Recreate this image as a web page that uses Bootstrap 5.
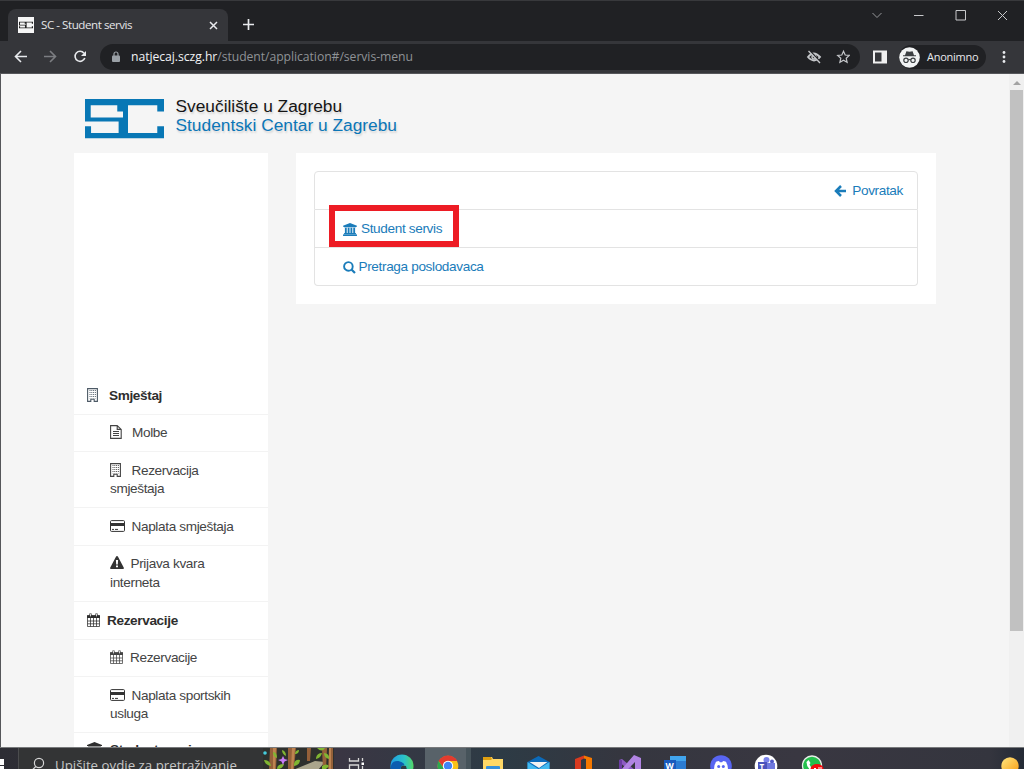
<!DOCTYPE html>
<html lang="hr">
<head>
<meta charset="utf-8">
<title>SC - Student servis</title>
<link href="https://cdn.jsdelivr.net/npm/bootstrap@5.3.0/dist/css/bootstrap.min.css" rel="stylesheet">
<style>
body{width:1024px;height:769px;overflow:hidden;background:#f5f5f5;font-family:"Liberation Sans",Arial,sans-serif;font-size:13.6px;letter-spacing:-.36px;line-height:18.6px;color:#444}
svg{display:block;flex:none}
a{color:#1a7cba;text-decoration:none}
.ui{font-family:"Open Sans","Noto Sans",sans-serif;letter-spacing:0}
.titlebar{height:41px;background:#202124;border-top:1px solid #38393c;padding-left:8px}
.tab{width:220px;height:32px;margin-top:8px;background:#35363a;border-radius:8px 8px 0 0;padding:0 10px;color:#e4e5e8;font-size:11.6px}
.toolbar{height:33px;background:#35363a;border-bottom:1px solid #55565a;padding-left:14px}
.address{width:760px;height:26px;border-radius:13px;background:#202124;margin-left:12px;padding:0 10px 0 11px;font-size:12.2px;letter-spacing:-.05px;color:#8f9296}
.address b{font-weight:400;color:#f1f2f4}
.profile{width:87px;height:24px;border-radius:12px;background:#202124;margin-left:12px;color:#e8eaed;font-size:11px;letter-spacing:-.25px}
.viewport{height:673px;border-left:1px solid #55565a}
.brandrow{height:79px;padding:25px 0 0 84px}
.brandtext{font-size:17.3px;letter-spacing:.02px;line-height:19px;margin:-2px 0 0 11.5px;text-shadow:1px 2px 2px #0002;color:#151515}
.brandtext div+div{color:#0b76b7}
.sidebar{width:194px;height:594px;margin-left:73px;padding-top:224.4px;overflow:hidden}
.side{height:37.5px;padding:9.500px 0 0 13px;border-bottom:1px solid #f3f3f3;flex:none}
.side.sub{padding-left:36px}
.side.two{height:56.1px}
.side.fw-bold{color:#2e2e2e}
.side svg{display:inline-block;vertical-align:-2px}
.panel{width:640px;height:151px;margin-left:28px;padding:18px}
.menu{width:604px;--bs-list-group-border-color:#e3e3e3;--bs-list-group-bg:#fff;--bs-list-group-border-radius:4px}
.menu .list-group-item{height:38px;padding:1px 14px 0 28px}
.menu .list-group-item:first-child{height:39px}
.pick{position:absolute;left:14px;top:-5px;width:130px;height:42px;border:6px solid #ed1c24}
.scroll{width:15px;background:#f0f0f0;padding-top:6px}
.thumb{width:13px;height:541px;background:#c1c1c1;margin-top:5px}
.taskbar{height:22px;background:linear-gradient(90deg,#2d2d34 0,#3a3643 340px,#2d3b45 500px,#35363f 620px,#393741 800px,#34353e 990px,#242a35);border-top:1px solid #77797b;overflow:hidden}
.search{width:245px;height:22px;background:#333435;border-left:1px solid #4b4c4e;padding-left:13px;color:#c6c6c6;font-size:13.3px}
.app{width:45.5px;height:22px}
</style>
</head>
<body class="d-flex flex-column">
<svg width="0" height="0" class="position-absolute">
<defs>
<symbol id="building" viewBox="0 0 12 14"><path d="M.6.6h9.800v12.800H7.200v-2.200H3.800v2.200H.6z" fill="none" stroke="currentColor" stroke-width="1.100"/><path d="M3 2v8.400M4.800 2v8.400M6.600 2v8.400M8.400 2v8.400" stroke="currentColor" stroke-width=".9" stroke-dasharray="1 1"/></symbol>
<symbol id="doc" viewBox="0 0 12 14"><path d="M.6.6h6.600L11.200 4.400v9H.6zM7.200.6v3.800h4" fill="none" stroke="currentColor" stroke-width="1.100"/><path d="M3 6.500h6M3 8.500h6M3 10.500h6" stroke="currentColor" stroke-width="1"/></symbol>
<symbol id="cardpay" viewBox="0 0 15 12"><rect x=".5" y=".6" width="14" height="10.800" rx="1" fill="none" stroke="currentColor"/><path d="M0 3h15v3H0z" fill="currentColor"/><path d="M2 9.400h2M5 9.400h3" stroke="currentColor"/></symbol>
<symbol id="warn" viewBox="0 0 14 13"><path fill="currentColor" fill-rule="evenodd" d="M7 0q.6 0 .9.6l5.800 10.800q.7 1.300-.7 1.500H1q-1.400-.2-.7-1.500L6.100.6Q6.400 0 7 0zM5.900 4l.3 4.600h1.600L8.100 4zM6 9.400v1.900h2V9.400z"/></symbol>
<symbol id="cal" viewBox="0 0 13 14"><path d="M.5 3h12v10.500H.5zM.5 8h12M.5 10.800h12M3.500 5v8.500M6.500 5v8.500M9.500 5v8.500" fill="none" stroke="currentColor" stroke-width=".75"/><path d="M0 2.200h13v2.800H0z" fill="currentColor"/><path d="M3.500.4v3M9.500.4v3" stroke="currentColor" stroke-width="2.200"/><path d="M3.500 1v2.400M9.500 1v2.400" stroke="#fff" stroke-width=".8"/></symbol>
<symbol id="bank" viewBox="0 0 15 14"><path fill="currentColor" d="M7.500 0 15 3v1h-1q0 .6-.6.600H1.600Q1 4.600 1 4H0V3zM2 5.200h2v5.600h1V5.200h2v5.600h1V5.200h2v5.600h1V5.200h2v5.600h.4q.6 0 .6.600v.4H1v-.4q0-.6.6-.6H2zM.6 12.200h13.800q.6 0 .6.600V14H0v-1.200q0-.6.6-.6z"/></symbol>
<symbol id="sc" viewBox="0 0 235 116"><path fill="currentColor" fill-rule="evenodd" d="M0 0H235V37H215V18H128V100H215V80H235V116H0V80H18V100H100V66H0zM17 18V54H113V37H96V18z"/></symbol>
</defs></svg>

<header class="ui">
<div class="titlebar d-flex">
 <div class="tab d-flex align-items-center">
  <svg width="16" height="16" viewBox="0 0 16 16"><path fill="#f6f6f6" d="M0 0h16v16H0z"/><use href="#sc" x="1" y="4.500" width="14" height="7" color="#222"/></svg>
  <span class="me-auto" style="margin-left:7px;letter-spacing:-.46px">SC - Student servis</span>
  <svg width="9" height="9" viewBox="0 0 9 9"><path d="m1 1 7 7m0-7L1 8" stroke="#e8eaed" stroke-width="1.500"/></svg>
 </div>
 <svg style="margin:16px 0 0 15px" width="11" height="13" viewBox="0 0 11 13"><path d="M5.500 2v11M0 7.500h11" stroke="#e8eaed" stroke-width="1.700"/></svg>
 <svg class="ms-auto" width="160" height="30" viewBox="864 0 160 30" fill="none" stroke="#c8c9cb"><path stroke="#96979a" d="m872.500 12 4.500 4.500 4.500-4.500"/><path d="M914 14.500h9.500M956 9.500h9.500v9.500H956zM998 10l9 9m0-9-9 9"/></svg>
</div>
<div class="toolbar d-flex align-items-center">
 <svg width="74" height="18" viewBox="0 0 74 18" fill="none" stroke-width="1.600"><path d="M13 8.500H2M7 3 1.500 8.500 7 14" stroke="#e8eaed"/><path d="M30 8.500h11M36 3l5.500 5.500L36 14" stroke="#7c7e82"/><path d="M70 5.200A5 5 0 1 0 70.800 10" stroke="#e8eaed"/><path d="M72 3v5h-5z" fill="#e8eaed"/></svg>
 <div class="address d-flex align-items-center">
  <svg width="10" height="12" viewBox="0 0 10 12"><rect x="1" y="4.500" width="8" height="6.500" rx="1" fill="#9aa0a6"/><path d="M3 5V3a2 2 0 0 1 4 0v2" fill="none" stroke="#9aa0a6" stroke-width="1.200"/></svg>
  <span class="me-auto" style="margin-left:10px"><b>natjecaj.sczg.hr</b>/student/application#/servis-menu</span>
  <svg width="44" height="16" viewBox="0 0 44 16" fill="none" stroke="#c4c6c9" stroke-width="1.400"><path d="M2 8q5.500-7 12 0-6 7-12 0z" stroke-width="1.900"/><circle cx="8" cy="8" r="2"/><path d="m3.500 1.500 11 11.500" stroke="#202124" stroke-width="1.500"/><path d="m2.500 2 11.500 12"/><path d="m37.500 2.200 1.700 3.800 4.100.4-3.100 2.800.9 4.100-3.600-2.100-3.600 2.100.9-4.100-3.100-2.800 4.100-.4z" stroke-width="1.200"/></svg>
 </div>
 <svg style="margin-left:13px" width="14" height="14" viewBox="0 0 14 14"><path fill="#f0f0f0" fill-rule="evenodd" d="M0 .5h14v13H0zM2 2.500v9h6.500v-9z"/></svg>
 <div class="profile d-flex align-items-center">
  <svg width="21" height="21" viewBox="0 0 21 21"><circle cx="10.500" cy="10.500" r="10.300" fill="#f1f3f4"/><path d="M4 9.300h13v-1H15L13.600 4.200l-3.100.6-3.100-.6L6 8.300H4z" fill="#3c4043"/><g fill="none" stroke="#3c4043" stroke-width="1.200"><circle cx="7" cy="13.300" r="2.200"/><circle cx="14" cy="13.300" r="2.200"/><path d="M9.200 13q1.300-1 2.600 0"/></g></svg>
  <span style="margin-left:7px">Anonimno</span>
 </div>
 <svg style="margin-left:15px" width="6" height="14" viewBox="0 0 6 14" fill="#e8eaed"><circle cx="3" cy="2.500" r="1.400"/><circle cx="3" cy="7" r="1.400"/><circle cx="3" cy="11.500" r="1.400"/></svg>
</div>
</header>

<div class="viewport d-flex">
<main class="flex-grow-1">
 <div class="brandrow d-flex">
  <svg width="79" height="39.500" color="#0877b5" viewBox="0 0 235 116" preserveAspectRatio="none"><use href="#sc"/></svg>
  <div class="brandtext"><div>Sveučilište u Zagrebu</div><div>Studentski Centar u Zagrebu</div></div>
 </div>
 <div class="d-flex align-items-start">
  <nav class="sidebar bg-white d-flex flex-column">
   <div class="side fw-bold"><svg width="12" height="14" color="#4d5a66"><use href="#building"/></svg><span style="margin-left:10px">Smještaj</span></div>
   <div class="side sub"><svg width="12" height="14"><use href="#doc"/></svg><span style="margin-left:10px">Molbe</span></div>
   <div class="side sub two"><svg width="12" height="14"><use href="#building"/></svg><span style="margin-left:9.500px">Rezervacija</span><br>smještaja</div>
   <div class="side sub"><svg width="15" height="12" color="#333" style="vertical-align:-1px"><use href="#cardpay"/></svg><span style="margin-left:6.500px">Naplata smještaja</span></div>
   <div class="side sub two"><svg width="14" height="13" color="#333" style="vertical-align:-1px"><use href="#warn"/></svg><span style="margin-left:6.500px">Prijava kvara</span><br>interneta</div>
   <div class="side fw-bold"><svg width="13" height="14"><use href="#cal"/></svg><span style="margin-left:7px">Rezervacije</span></div>
   <div class="side sub"><svg width="13" height="14"><use href="#cal"/></svg><span style="margin-left:7px">Rezervacije</span></div>
   <div class="side sub two"><svg width="15" height="12" color="#333" style="vertical-align:-1px"><use href="#cardpay"/></svg><span style="margin-left:6.500px">Naplata sportskih</span><br>usluga</div>
   <div class="side fw-bold pt-2"><svg width="15" height="14"><use href="#bank"/></svg><span style="margin-left:8px">Student servis</span></div>
  </nav>
  <section class="panel bg-white">
   <div class="list-group menu">
    <div class="list-group-item d-flex align-items-center justify-content-end"><a href="#" class="d-flex align-items-center"><svg style="margin-top:-1px" width="12" height="12" viewBox="0 0 12 12"><path d="M7 1 2 6l5 5M2.500 6H12" fill="none" stroke="currentColor" stroke-width="2.500"/></svg><span style="margin-left:6px">Povratak</span></a></div>
    <div class="list-group-item d-flex align-items-center"><a href="#" class="d-flex align-items-center"><svg width="14" height="13"><use href="#bank"/></svg><span style="margin-left:4px">Student servis</span></a><div class="pick"></div></div>
    <div class="list-group-item d-flex align-items-center"><a href="#" class="d-flex align-items-center"><svg width="13" height="13" viewBox="0 0 13 13"><circle cx="5.400" cy="5.400" r="4.300" fill="none" stroke="currentColor" stroke-width="1.900"/><path d="m8.500 8.500 3.500 3.500" stroke="currentColor" stroke-width="2.200"/></svg><span style="margin-left:2.500px">Pretraga poslodavaca</span></a></div>
   </div>
  </section>
 </div>
</main>
<div class="scroll d-flex flex-column align-items-center"><svg width="8" height="5" viewBox="0 0 8 5"><path d="M0 5h8L4 1z" fill="#a3a3a3"/></svg><div class="thumb"></div></div>
</div>

<footer class="taskbar d-flex ui">
 <svg width="18" height="22" viewBox="0 0 18 22"><path d="M0 11h4v6H0zM0 18h4v4H0z" fill="#fff"/></svg>
 <div class="search d-flex"><svg width="14" height="22" viewBox="0 0 14 22" fill="none" stroke="#d6d6d6" stroke-width="1.200"><circle cx="7" cy="15" r="4.600"/><path d="m3.800 18.500-4 4"/></svg><span style="margin:8px 0 0 9px;white-space:nowrap">Upišite ovdje za pretraživanje</span></div>
 <svg width="71" height="22" viewBox="0 0 71 22"><path fill="#2e302d" d="M0 0h71v22H0z"/><path d="M30 22 52 13l10 1-7 8z" fill="#aaa58c"/><path d="M7 0h7l-1 22H6zM25 0h8l-2 22h-6zM44 0h4l-1 13h-3zM59 0h5l-1 22h-3zM66 0h4v22h-5z" fill="#946039"/><path d="M10 0h3l-1 22h-2zM29 0h3l-2 22h-2zM66 0h2v22h-2z" fill="#bd8350"/><path d="M1 12q6 0 7 6-6-1-7-6zM14 10q0-6-4-6 0 5 4 6zM14 21q0-5 7-5-1 5-7 5zM19 2q4 1 4 6-4-2-4-6zM31 16q1-5 6-4 0 5-6 6zM32 5q1-3 4-3 0 4-4 4zM53 10q1-5 6-5-1 5-6 6zM61 5q6 1 5 6-5-1-5-6zM59 18q5-3 7 0-3 4-7 4zM54 0h8q-3 5-8 0z" fill="#80b532"/><circle cx="2" cy="5" r="1.800" fill="#45cbdc"/><path d="m20 8 1.500 3 3.500 1-3.500 1.500L20 17l-1.500-3.500L15 12l3.500-1z" fill="#c77bf5"/></svg>
 <div class="app d-flex justify-content-center"><svg width="17" height="22" viewBox="0 0 17 22" fill="none" stroke="#d6d6d6" stroke-width="1.300"><path d="M1.500 10v3h9v-3M1.500 22v-5h9v5M14.500 10v3M14.500 18v4"/><path d="M13.500 14.500h2.500v2.500h-2.500z" fill="#fff" stroke="none"/></svg></div>
 <div class="app d-flex justify-content-center"><svg width="24" height="22" viewBox="0 0 24 22"><defs><linearGradient id="ed"><stop stop-color="#1f9de4"/><stop offset=".6" stop-color="#2bc3c8"/><stop offset="1" stop-color="#55d766"/></linearGradient></defs><circle cx="12" cy="18" r="11.500" fill="url(#ed)"/><path d="M.5 22q0-10 8-9 5 1 6 4-4 0-4 5z" fill="#0d5daf"/><path d="M11 22q-1-6 5-4l1 4z" fill="#2d3b45"/></svg></div>
 <div class="app d-flex justify-content-center" style="background:linear-gradient(90deg,#586269 41px,#46535a 41px)"><svg width="22" height="22" viewBox="0 0 22 22"><circle cx="11" cy="18" r="10.300" fill="#fbc116"/><path d="M1.500 13Q5 7.500 11 7.500T20.500 13H11q-4 0-5 6z" fill="#e33b2e"/><path d="M1.500 13q-2 4 0 9H9l-3-3z" fill="#2da94f"/><circle cx="11" cy="18" r="5.200" fill="#fff"/><circle cx="11" cy="18" r="4.200" fill="#4285f4"/></svg></div>
 <div class="app d-flex justify-content-center"><svg width="22" height="22" viewBox="0 0 22 22"><path d="M1 9h9l1 2h10v11H1z" fill="#ffd866"/><path d="M1 9h8l1 2-1 1H1z" fill="#e0a010"/><path d="M4 22v-3q0-1 1-1h12q1 0 1 1v3z" fill="#368fda"/></svg></div>
 <div class="app d-flex justify-content-center"><svg width="23" height="22" viewBox="0 0 23 22"><path d="m.5 14 11-6 11 6v8H.5z" fill="#0b6ab9"/><path d="M2.500 14h18L12 20z" fill="#f2f2f2"/><path d="m.5 14 11 7 11-7v8H.5z" fill="#42b9ef"/></svg></div>
 <div class="app d-flex justify-content-center"><svg width="20" height="22" viewBox="0 0 20 22"><path d="m1 11 9-3.500v3L7 12v10H1z" fill="#d93a20"/><path d="m10 7.500 8 2.500v12h-6V11l-2-.5z" fill="#f57800"/></svg></div>
 <div class="app d-flex justify-content-center"><svg width="24" height="22" viewBox="0 0 24 22"><path d="m1 12 3-1 13 11h-6L1 14z" fill="#8d5bc3"/><path d="m16 7 7 3v12h-6v-8l-8 8H3z" fill="#b184e3"/><path d="M1 12h3v10H1z" fill="#6d3da5"/></svg></div>
 <div class="app d-flex justify-content-center"><svg width="22" height="22" viewBox="0 0 22 22"><path d="M6 8h16v14H6z" fill="#2b7cd3"/><path d="M6 8h16v5H6z" fill="#41a5ee"/><path d="M0 12h12v10H0z" fill="#185abd"/><text x="1.500" y="21" font-size="8.500" font-weight="700" fill="#fff">W</text></svg></div>
 <div class="app d-flex justify-content-center"><svg width="22" height="22" viewBox="0 0 22 22"><circle cx="11" cy="18" r="10.800" fill="#5865f2"/><path d="M4 22q0-6 2.500-8.500L9 13l.8 1.200h2.400L13 13l2.500.5Q18 16 18 22z" fill="#fff"/><circle cx="8.700" cy="18.500" r="1.500" fill="#5865f2"/><circle cx="13.300" cy="18.500" r="1.500" fill="#5865f2"/></svg></div>
 <div class="app d-flex justify-content-center"><svg width="24" height="22" viewBox="0 0 24 22"><circle cx="12" cy="18" r="11.300" fill="#fff"/><circle cx="12.500" cy="12" r="3" fill="#7b83eb"/><circle cx="18" cy="13.500" r="2" fill="#5059c9"/><path d="M9 15h12v7H9z" fill="#7079df"/><path d="M4 14h9v8H4z" fill="#4b53bc"/><text x="5.500" y="21.500" font-size="8" font-weight="700" fill="#fff">T</text></svg></div>
 <div class="app d-flex justify-content-center"><svg width="24" height="22" viewBox="0 0 24 22"><circle cx="12" cy="17.500" r="9.500" fill="#24c04c" stroke="#e8eee8" stroke-width="1.300"/><path d="m6.500 14 2-2 2 3-1 1.500q1 2.500 3 4l-2 1.500q-4-3-4-8z" fill="#fff"/><ellipse cx="17" cy="21" rx="6.500" ry="5" fill="#f30d0d"/><path d="M14 20.500h2M18 20h4" stroke="#fff"/></svg></div>
 <svg class="ms-auto" style="margin-right:4px" width="20" height="22" viewBox="0 0 20 22"><defs><linearGradient id="sun" x2="1" y2="1"><stop stop-color="#ffe781"/><stop offset="1" stop-color="#f79a10"/></linearGradient></defs><circle cx="10" cy="18" r="8.700" fill="url(#sun)"/></svg>
</footer>
<script src="https://cdn.jsdelivr.net/npm/bootstrap@5.3.0/dist/js/bootstrap.bundle.min.js"></script>
</body>
</html>
